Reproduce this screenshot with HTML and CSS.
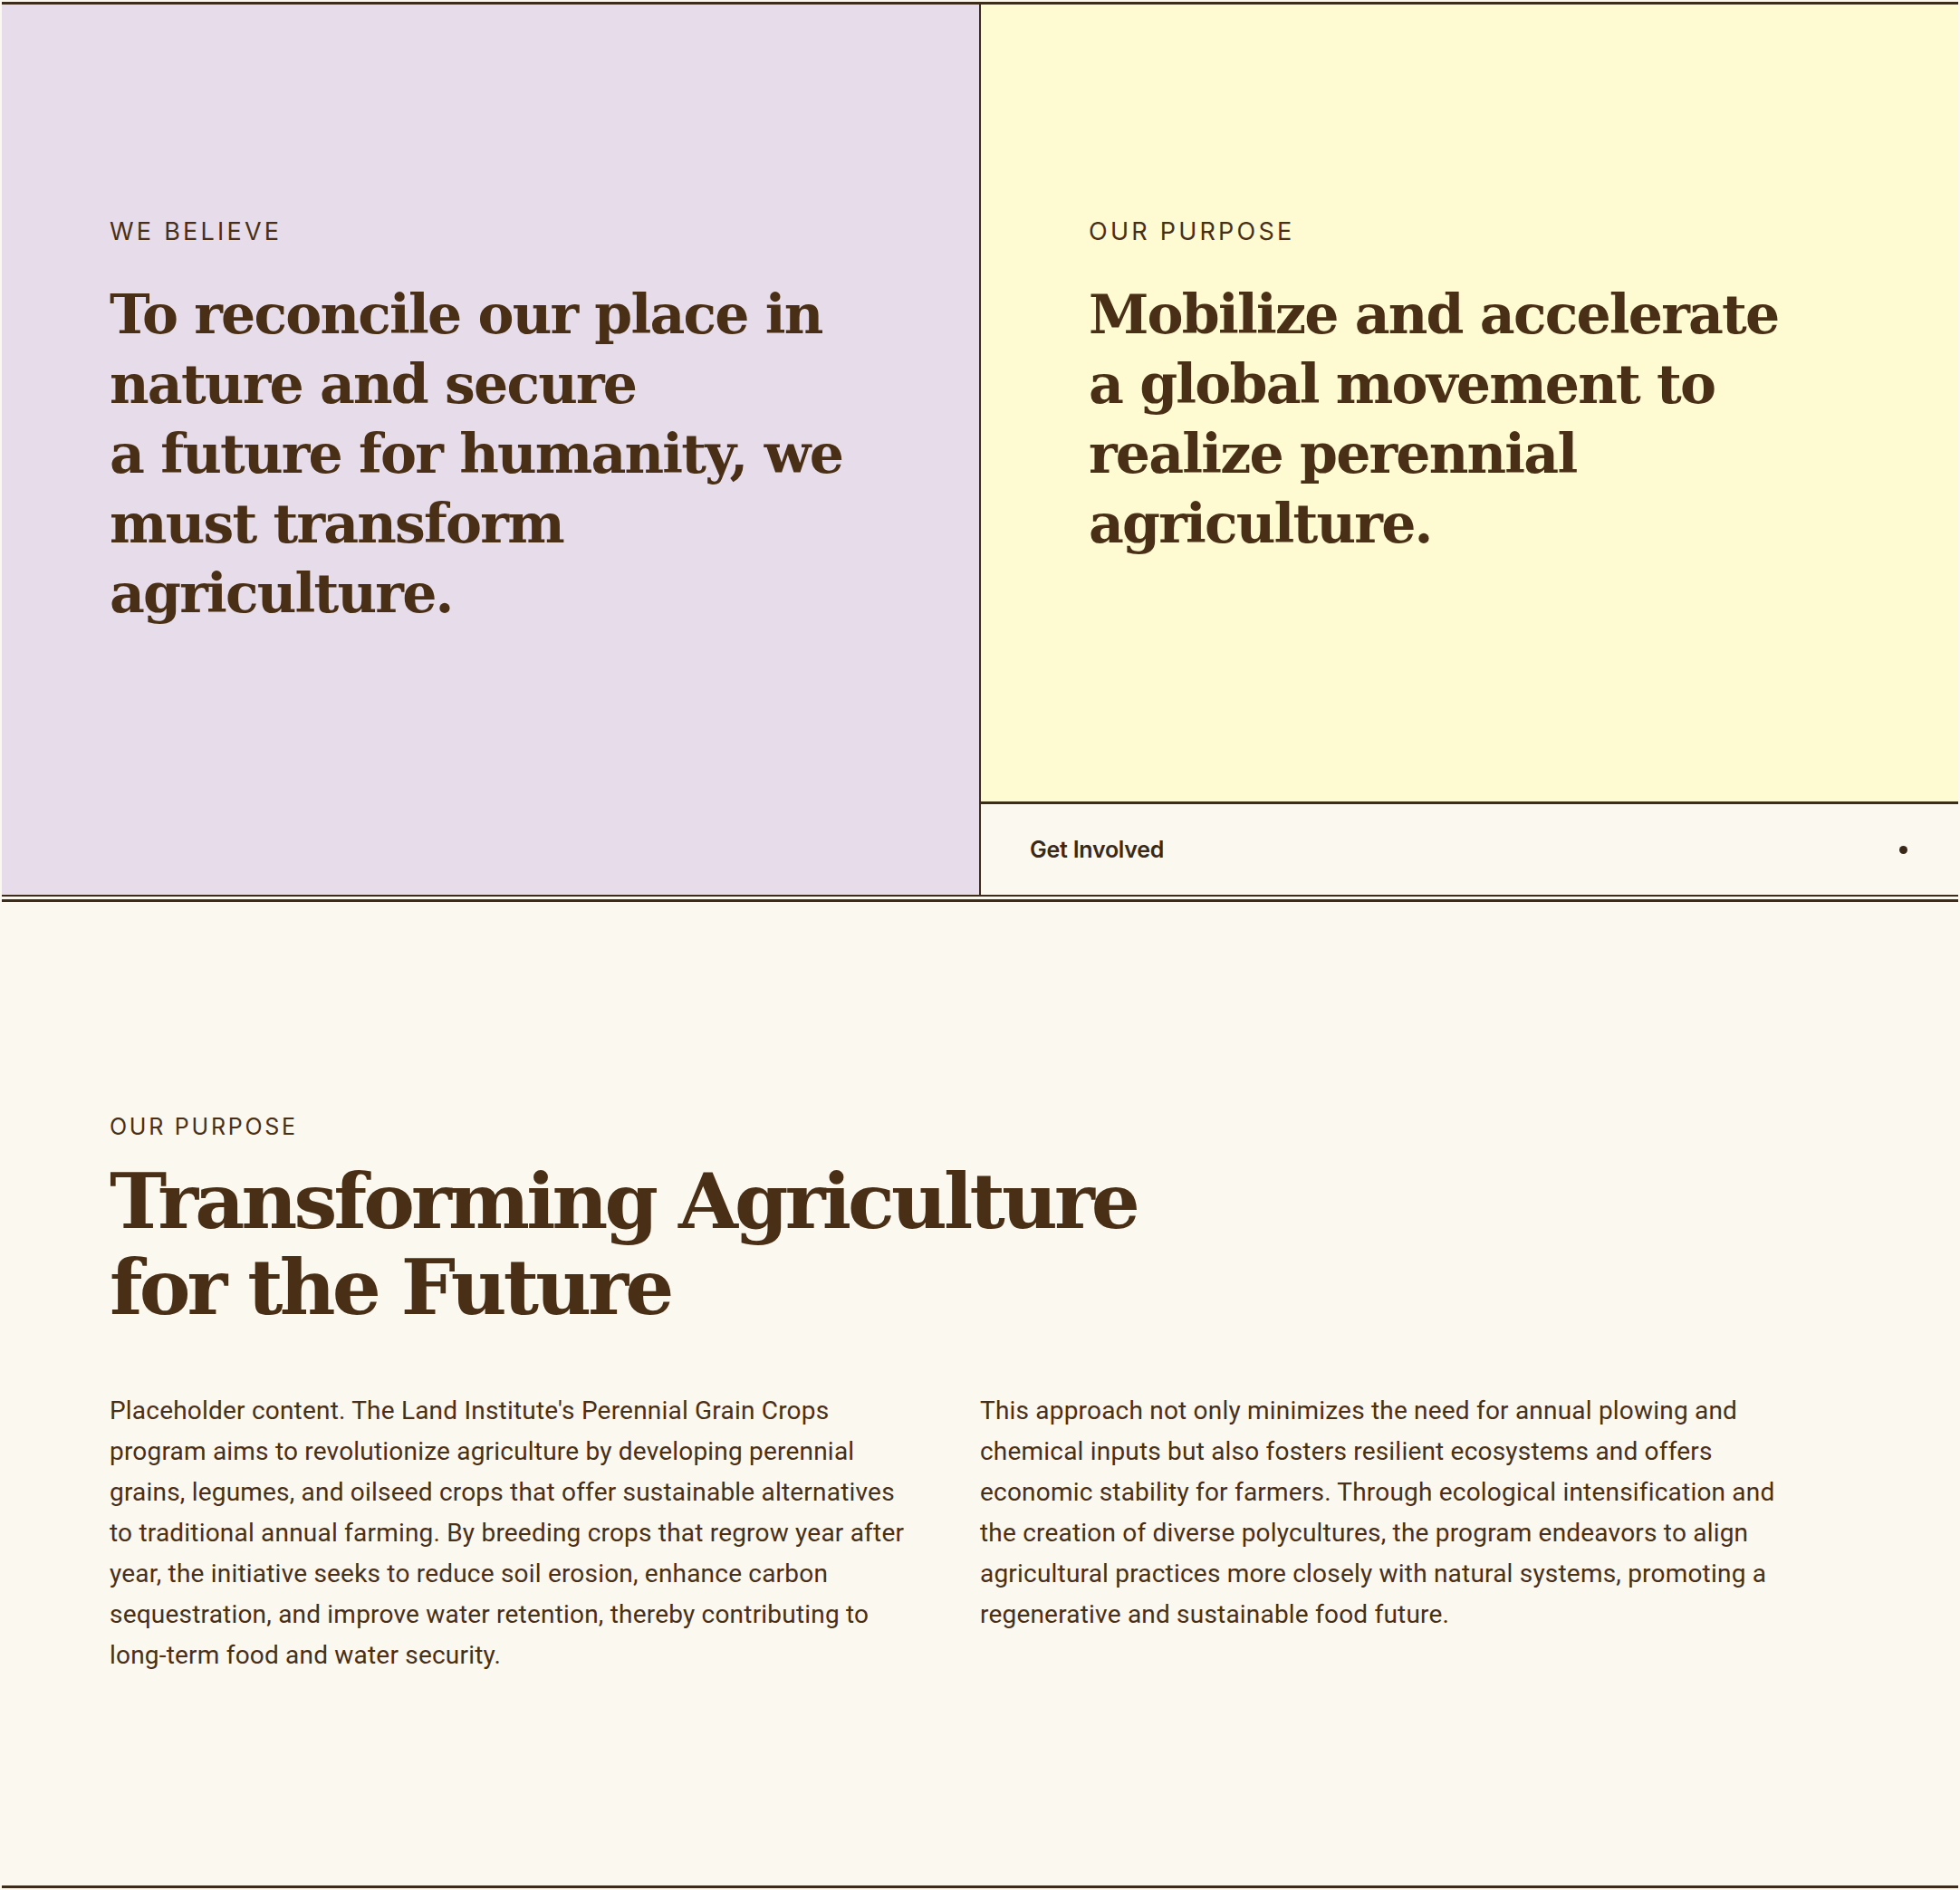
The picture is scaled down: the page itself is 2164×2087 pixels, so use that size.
FILE: index.html
```html
<!DOCTYPE html>
<html lang="en">
<head>
<meta charset="utf-8">
<title>The Land Institute — Our Purpose</title>
<link rel="stylesheet" href="styles.css">
</head>
<body>
<main class="page">
  <section class="hero">
    <div class="panel panel--believe">
      <p class="eyebrow">WE BELIEVE</p>
      <h2 class="statement">To reconcile our place in<br>nature and secure<br>a future for humanity, we<br>must transform<br>agriculture.</h2>
    </div>
    <div class="hero-side">
      <div class="panel panel--purpose">
        <p class="eyebrow">OUR PURPOSE</p>
        <h2 class="statement">Mobilize and accelerate<br>a global movement to<br>realize perennial<br>agriculture.</h2>
      </div>
      <a class="cta" href="#">
        <span class="cta-label">Get Involved</span>
        <span class="cta-dot"></span>
      </a>
    </div>
  </section>
  <section class="intro">
    <p class="eyebrow eyebrow--small">OUR PURPOSE</p>
    <h1 class="title">Transforming Agriculture<br>for the Future</h1>
    <div class="cols">
      <p class="copy">Placeholder content. The Land Institute's Perennial Grain Crops<br>program aims to revolutionize agriculture by developing perennial<br>grains, legumes, and oilseed crops that offer sustainable alternatives<br>to traditional annual farming. By breeding crops that regrow year after<br>year, the initiative seeks to reduce soil erosion, enhance carbon<br>sequestration, and improve water retention, thereby contributing to<br>long-term food and water security.</p>
      <p class="copy">This approach not only minimizes the need for annual plowing and<br>chemical inputs but also fosters resilient ecosystems and offers<br>economic stability for farmers. Through ecological intensification and<br>the creation of diverse polycultures, the program endeavors to align<br>agricultural practices more closely with natural systems, promoting a<br>regenerative and sustainable food future.</p>
    </div>
  </section>
</main>
</body>
</html>
```

FILE: styles.css
```css
* { box-sizing: border-box; }

html, body {
  margin: 0;
  background: #fbf8ef;
  color: #4a2f17;
}

.page {
  padding: 2px;
}

.hero {
  display: grid;
  grid-template-columns: 1081px 1fr;
  border-top: 3px solid #3e2c1b;
  border-bottom: 2px solid #3e2c1b;
}

.panel {
  padding: 235px 119px 0 119px;
}

.panel--believe {
  background: #e7ddea;
  border-right: 2px solid #3e2c1b;
}

.hero-side {
  display: flex;
  flex-direction: column;
}

.panel--purpose {
  background: #fefad2;
  border-bottom: 3px solid #3e2c1b;
  height: 883px;
}

.eyebrow {
  margin: 0;
  font-family: Inter, "Liberation Sans", sans-serif;
  font-weight: 400;
  font-size: 27px;
  line-height: 31px;
  letter-spacing: 0.12em;
  color: #4a2f17;
}

.eyebrow--small {
  font-size: 25px;
  letter-spacing: 0.11em;
}

.statement {
  margin: 38px 0 0 0;
  font-family: "DejaVu Serif", "Liberation Serif", serif;
  font-weight: 700;
  font-size: 60px;
  line-height: 77px;
  letter-spacing: -0.03em;
  color: #4a2f17;
  white-space: nowrap;
}

.cta {
  height: 100px;
  display: flex;
  align-items: center;
  justify-content: space-between;
  padding: 0 56px 0 54px;
  text-decoration: none;
  color: #3a2819;
}

.cta-label {
  font-family: Inter, "Liberation Sans", sans-serif;
  font-weight: 600;
  font-size: 25px;
  letter-spacing: -0.01em;
}

.cta-dot {
  width: 9px;
  height: 9px;
  border-radius: 50%;
  background: #3a2819;
}

.intro {
  margin-top: 3px;
  border-top: 3px solid #3e2c1b;
  border-bottom: 3px solid #3e2c1b;
  padding: 233px 119px 232px 119px;
}

.title {
  margin: 19px 0 0 0;
  font-family: "DejaVu Serif", "Liberation Serif", serif;
  font-weight: 700;
  font-size: 85px;
  line-height: 95px;
  letter-spacing: -0.045em;
  color: #4a2f17;
  white-space: nowrap;
}

.cols {
  display: grid;
  grid-template-columns: 961px 1fr;
  margin-top: 66px;
}

.copy {
  margin: 0;
  font-family: Roboto, "Liberation Sans", sans-serif;
  font-size: 28px;
  line-height: 45px;
  letter-spacing: 0.2px;
  color: #4a2f17;
  white-space: nowrap;
}
```
